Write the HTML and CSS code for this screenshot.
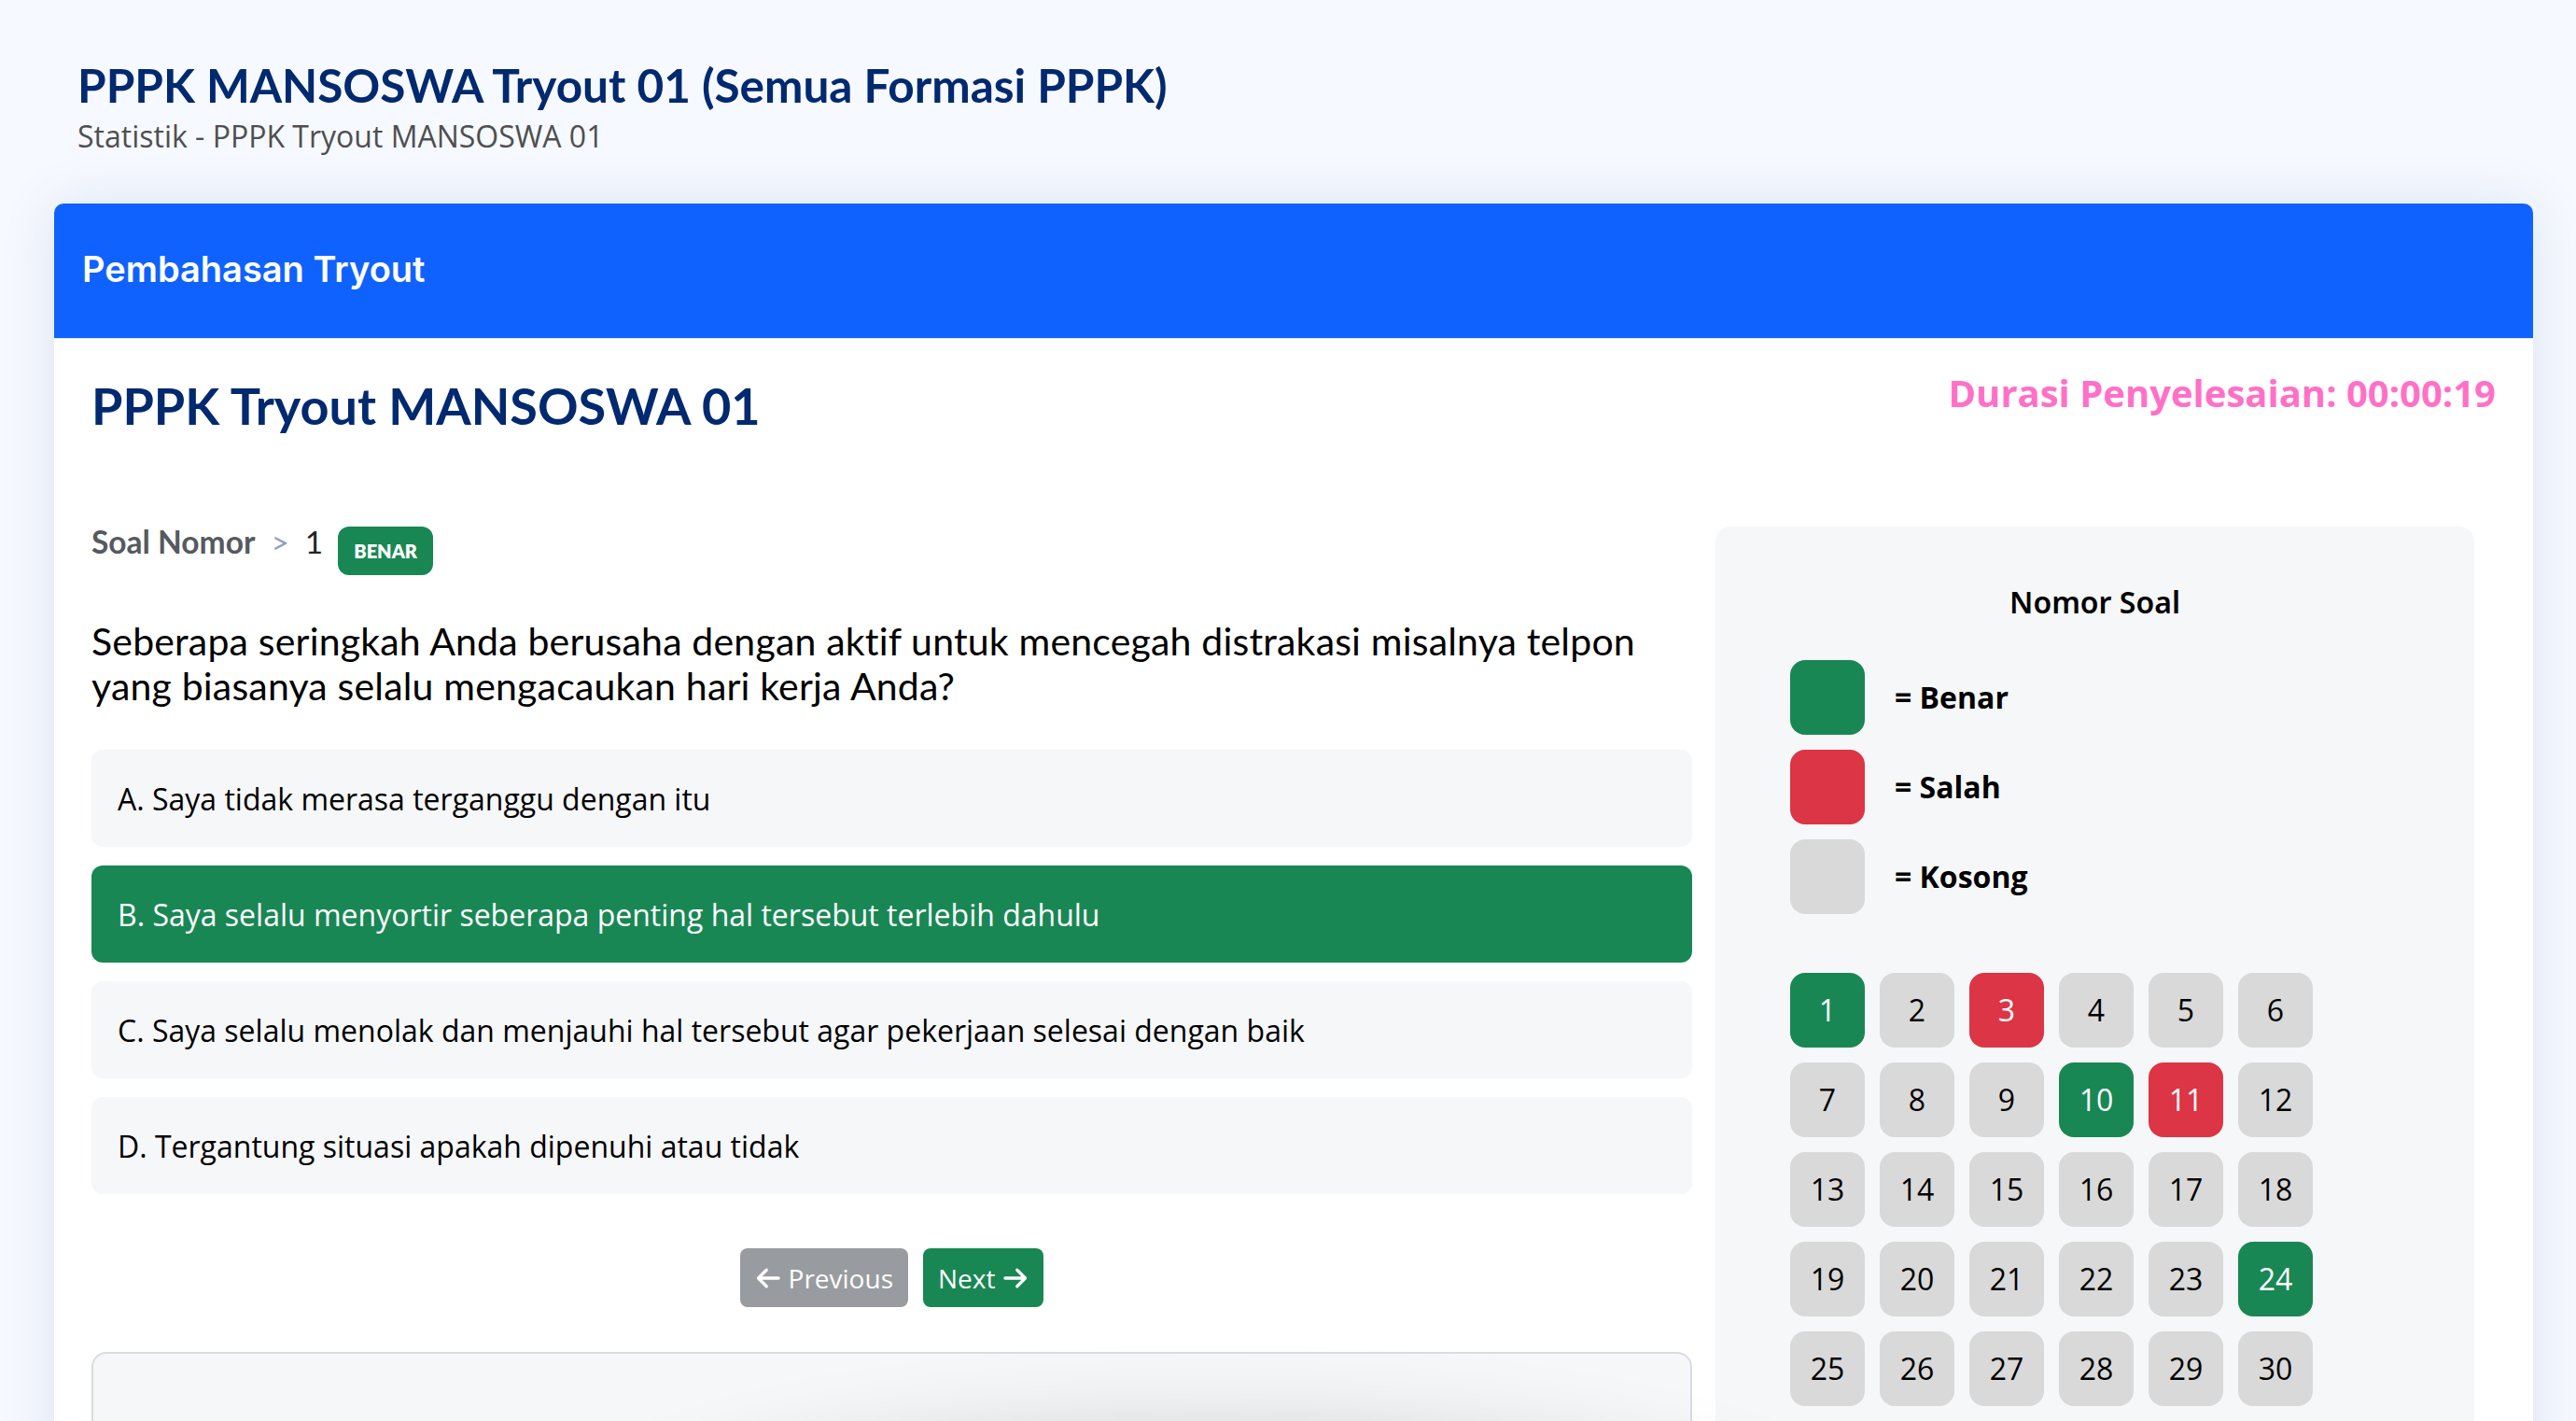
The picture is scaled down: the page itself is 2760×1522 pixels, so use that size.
FILE: index.html
```html
<!DOCTYPE html>
<html lang="id">
<head>
<meta charset="utf-8">
<title>Pembahasan Tryout</title>
<link rel="stylesheet" href="styles.css">
</head>
<body>
<main class="main">
  <div class="pagetitle">
    <h1 class="page-h1">PPPK MANSOSWA Tryout 01 (Semua Formasi PPPK)</h1>
    <div class="page-sub">Statistik - PPPK Tryout MANSOSWA 01</div>
  </div>

  <section class="card">
    <div class="card-header">Pembahasan Tryout</div>
    <div class="card-body">
      <div class="top-row">
        <h2 class="exam-title">PPPK Tryout MANSOSWA 01</h2>
        <div class="duration">Durasi Penyelesaian: 00:00:19</div>
      </div>

      <div class="content">
        <div class="left">
          <div class="crumb">
            <span class="crumb-label">Soal Nomor</span>
            <span class="crumb-sep">&gt;</span>
            <span class="crumb-num">1</span>
            <span class="badge">BENAR</span>
          </div>
          <p class="question">Seberapa seringkah Anda berusaha dengan aktif untuk mencegah distrakasi misalnya telpon yang biasanya selalu mengacaukan hari kerja Anda?</p>
          <div class="options">
            <div class="option">A. Saya tidak merasa terganggu dengan itu</div>
            <div class="option option-correct">B. Saya selalu menyortir seberapa penting hal tersebut terlebih dahulu</div>
            <div class="option">C. Saya selalu menolak dan menjauhi hal tersebut agar pekerjaan selesai dengan baik</div>
            <div class="option">D. Tergantung situasi apakah dipenuhi atau tidak</div>
          </div>
          <div class="nav">
            <button class="btn btn-prev" type="button"><svg class="arrow" viewBox="0 0 24 24"><path d="M21.5 12H3M10.5 4.5L3 12l7.5 7.5"/></svg>Previous</button>
            <button class="btn btn-next" type="button">Next<svg class="arrow" viewBox="0 0 24 24"><path d="M2.5 12H21M13.5 4.5L21 12l-7.5 7.5"/></svg></button>
          </div>
          <div class="explain"></div>
        </div>

        <aside class="panel">
          <div class="panel-title">Nomor Soal</div>
          <div class="legend">
            <div class="legend-row"><span class="swatch green"></span><span class="legend-text">= Benar</span></div>
            <div class="legend-row"><span class="swatch red"></span><span class="legend-text">= Salah</span></div>
            <div class="legend-row"><span class="swatch gray"></span><span class="legend-text">= Kosong</span></div>
          </div>
          <div class="numgrid">
            <span class="num green">1</span><span class="num">2</span><span class="num red">3</span><span class="num">4</span><span class="num">5</span><span class="num">6</span>
            <span class="num">7</span><span class="num">8</span><span class="num">9</span><span class="num green">10</span><span class="num red">11</span><span class="num">12</span>
            <span class="num">13</span><span class="num">14</span><span class="num">15</span><span class="num">16</span><span class="num">17</span><span class="num">18</span>
            <span class="num">19</span><span class="num">20</span><span class="num">21</span><span class="num">22</span><span class="num">23</span><span class="num green">24</span>
            <span class="num">25</span><span class="num">26</span><span class="num">27</span><span class="num">28</span><span class="num">29</span><span class="num">30</span>
          </div>
        </aside>
      </div>
    </div>
  </section>
</main>
<div class="bottom-shadow"></div>
</body>
</html>
```

FILE: styles.css
```css
* { box-sizing: border-box; }

html, body {
  margin: 0;
  padding: 0;
}

body {
  background: #f6f9ff;
  font-family: "Open Sans", "Liberation Sans", sans-serif;
  font-size: 32px;
  color: #212529;
  overflow: hidden;
  height: 1522px;
}

.main {
  padding: 62px 46px 0 58px;
}

.pagetitle {
  padding-left: 25px;
  margin-bottom: 48px;
}

.page-h1 {
  margin: 0;
  font-family: "Lato", sans-serif;
  font-weight: 700;
  font-size: 49.5px;
  line-height: 1.2;
  color: #012970;
}

.page-sub {
  margin-top: 1px;
  font-size: 32px;
  line-height: 48px;
  color: #4f4f4f;
}

.card {
  background: #fff;
  border-radius: 10px;
  box-shadow: 0 0 60px rgba(1, 41, 112, 0.1);
  height: 1500px;
}

.card-header {
  height: 145px;
  background: #0f62fe;
  border-radius: 10px 10px 0 0;
  border-bottom: 1px solid #e3e8f0;
  padding-left: 30px;
  padding-bottom: 4px;
  display: flex;
  align-items: center;
  font-family: "Inter", sans-serif;
  font-weight: 600;
  font-size: 38px;
  color: #fff;
}

.card-body {
  padding: 40px 40px 0 40px;
}

.top-row {
  display: flex;
  justify-content: space-between;
  align-items: flex-start;
}

.exam-title {
  margin: 0;
  font-family: "Lato", sans-serif;
  font-weight: 700;
  font-size: 54px;
  line-height: 1.2;
  color: #012970;
}

.duration {
  margin-top: -6px;
  font-weight: 700;
  font-size: 40px;
  line-height: 1.2;
  color: #ff70c6;
}

.content {
  margin-top: 96px;
  display: grid;
  grid-template-columns: 1715px 813px;
  column-gap: 25px;
  align-items: start;
}

.crumb {
  display: flex;
  align-items: flex-start;
  height: 52px;
  font-family: "Lato", sans-serif;
  font-size: 33.5px;
  line-height: 33px;
}

.crumb-label {
  font-weight: 700;
  color: #555a5f;
}

.crumb-sep {
  margin: 0 17px;
  color: #8fa0c2;
}

.crumb-num {
  color: #212529;
  margin-right: 16px;
}

.badge {
  height: 52px;
  padding: 0 17px;
  display: flex;
  align-items: center;
  background: #198754;
  color: #fff;
  border-radius: 12px;
  font-family: "Lato", sans-serif;
  font-weight: 800;
  font-size: 20px;
  line-height: 1;
}

.question {
  margin: 47px 0 0 0;
  font-family: "Lato", sans-serif;
  font-size: 41px;
  letter-spacing: 0.18px;
  line-height: 48px;
  color: #000;
}

.options {
  margin-top: 44px;
  display: flex;
  flex-direction: column;
  gap: 20px;
}

.option {
  height: 104px;
  padding: 0 28px;
  display: flex;
  align-items: center;
  background: #f6f7f9;
  border-radius: 12px;
  font-size: 32px;
  color: #000;
}

.option-correct {
  background: #198754;
  color: #fff;
}

.nav {
  margin-top: 58px;
  display: flex;
  justify-content: center;
  gap: 16px;
}

.btn {
  height: 63px;
  padding: 0 16px;
  border: none;
  border-radius: 8px;
  display: flex;
  align-items: center;
  gap: 8px;
  font-family: "Open Sans", sans-serif;
  font-size: 28px;
  color: #fff;
}

.btn-prev {
  background: #989ca0;
}

.btn-next {
  background: #198754;
}

.arrow {
  width: 28px;
  height: 28px;
  fill: none;
  stroke: #fff;
  stroke-width: 2.8;
  stroke-linecap: round;
  stroke-linejoin: round;
}

.explain {
  margin-top: 48px;
  height: 400px;
  background: #f6f7f9;
  border: 2px solid #d8dce2;
  border-radius: 16px;
}

.panel {
  background: #f6f7f9;
  border-radius: 16px;
  padding: 62px 0 0 80px;
  height: 1200px;
}

.panel-title {
  margin-left: -80px;
  text-align: center;
  font-family: "Noto Sans", sans-serif;
  font-weight: 600;
  font-size: 32px;
  line-height: 1.2;
  color: #000;
}

.legend {
  margin-top: 42px;
  display: flex;
  flex-direction: column;
  gap: 16px;
}

.legend-row {
  display: flex;
  align-items: center;
  gap: 32px;
}

.swatch {
  width: 80px;
  height: 80px;
  border-radius: 16px;
}

.legend-text {
  font-weight: 700;
  font-size: 32px;
  color: #000;
}

.green { background: #198754; color: #fff; }
.red { background: #dc3545; color: #fff; }
.gray { background: #d9d9d9; }

.numgrid {
  margin-top: 63px;
  display: grid;
  grid-template-columns: repeat(6, 80px);
  grid-auto-rows: 80px;
  gap: 16px;
}

.num {
  display: flex;
  align-items: center;
  justify-content: center;
  border-radius: 16px;
  background: #d9d9d9;
  font-size: 32px;
  color: #000;
}

.num.green { background: #198754; color: #fff; }
.num.red { background: #dc3545; color: #fff; }

.bottom-shadow {
  position: fixed;
  left: 700px;
  top: 1590px;
  width: 1200px;
  height: 200px;
  border-radius: 50%;
  box-shadow: 0 0 110px 40px rgba(0, 0, 0, 0.22);
}
```
